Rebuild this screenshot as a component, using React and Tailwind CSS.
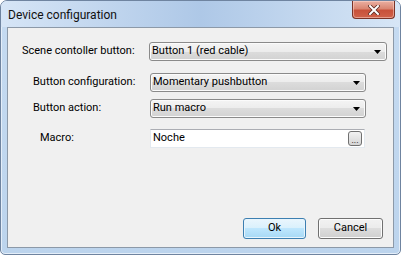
import React from "react";

function Arrow() {
  return (
    <svg width="7" height="4" viewBox="0 0 7 4" className="shrink-0">
      <path d="M0 0h7L3.5 4z" fill="#000" />
    </svg>
  );
}

function Combo({ value, className }) {
  return (
    <div
      className={
        "h-[19px] flex items-center pl-[2px] pr-[5px] rounded-[3px] border border-[#8a8a8a] bg-[linear-gradient(#f4f4f4,#ececec_50%,#dcdcdc_50%,#d2d2d2)] shadow-[inset_0_0_0_1px_#fbfbfb] " +
        className
      }
    >
      <span className="flex-1 truncate">{value}</span>
      <Arrow />
    </div>
  );
}

export default function App() {
  return (
    <div className="w-[401px] h-[256px] bg-white text-[11px] text-black font-['Roboto',sans-serif]">
      <div className="w-[401px] h-[255px] flex flex-col rounded-t-[7px] rounded-b-[5px] border border-[#6f84a0] bg-gradient-to-b from-[#c6dbf1] to-[#bcd4ed] shadow-[inset_0_0_0_1px_#e4eef9]">
        {/* title bar */}
        <div className="h-[26px] flex items-start rounded-t-[6px] bg-gradient-to-r from-[#d6e5f6] via-[#aec8e7] to-[#d7e6f6]">
          <span className="pl-[7px] pt-[7px] text-[12px] leading-[14px] text-[#111]">Device configuration</span>
          <div className="ml-auto mr-[5px] w-[43px] h-[18px] flex items-center justify-center rounded-b-[4px] border border-t-0 border-[#7a3327] bg-[linear-gradient(#eab0a2,#d98672_45%,#c8513a_55%,#d0624a)] shadow-[inset_0_0_0_1px_rgba(255,220,210,0.5)]">
            <svg width="12" height="10" viewBox="0 0 12 10">
              <path d="M2 1l8 8M10 1l-8 8" stroke="#5a2a22" strokeWidth="3.6" strokeLinecap="square" />
              <path d="M2 1l8 8M10 1l-8 8" stroke="#fff" strokeWidth="2" strokeLinecap="square" />
            </svg>
          </div>
        </div>

        {/* client area */}
        <div className="mx-[6px] mb-[6px] flex-1 flex flex-col border border-[#8c99a8] bg-[#f0f0f0]">
          <div className="mt-[14px] pl-[14px] pr-[6px] flex items-center">
            <span className="w-[127px] shrink-0">Scene contoller button:</span>
            <Combo value="Button 1 (red cable)" className="flex-1" />
          </div>

          <div className="mt-[12px] pl-[25px] flex items-center">
            <span className="w-[117px] shrink-0">Button configuration:</span>
            <Combo value="Momentary pushbutton" className="w-[216px]" />
          </div>

          <div className="mt-[7px] pl-[25px] flex items-center">
            <span className="w-[117px] shrink-0">Button action:</span>
            <Combo value="Run macro" className="w-[216px]" />
          </div>

          <div className="mt-[11px] pl-[32px] flex items-center">
            <span className="w-[110px] shrink-0">Macro:</span>
            <div className="w-[215px] h-[19px] flex items-center pl-[2px] pr-[2px] bg-white border border-[#e3e9ef] border-t-[#abadb3]">
              <span className="flex-1">Noche</span>
              <div className="w-[14px] h-[15px] flex items-end justify-center pb-[2px] rounded-[3px] border border-[#707070] bg-gradient-to-b from-[#f2f2f2] to-[#d5d5d5] text-[9px] leading-[6px]">
                ...
              </div>
            </div>
          </div>

          <div className="mt-auto mb-[8px] pr-[10px] flex justify-end gap-[12px]">
            <button className="w-[63px] h-[21px] rounded-[3px] border border-[#3c7fb1] bg-[linear-gradient(#eaf6fd,#d9f0fc_50%,#bee6fd_50%,#a7d9f5)] shadow-[inset_0_0_0_1px_#e8f4fc] text-[11px]">
              Ok
            </button>
            <button className="w-[65px] h-[21px] rounded-[3px] border border-[#707070] bg-[linear-gradient(#f2f2f2,#ebebeb_50%,#dddddd_50%,#cfcfcf)] shadow-[inset_0_0_0_1px_#fcfcfc] text-[11px]">
              Cancel
            </button>
          </div>
        </div>
      </div>
    </div>
  );
}
